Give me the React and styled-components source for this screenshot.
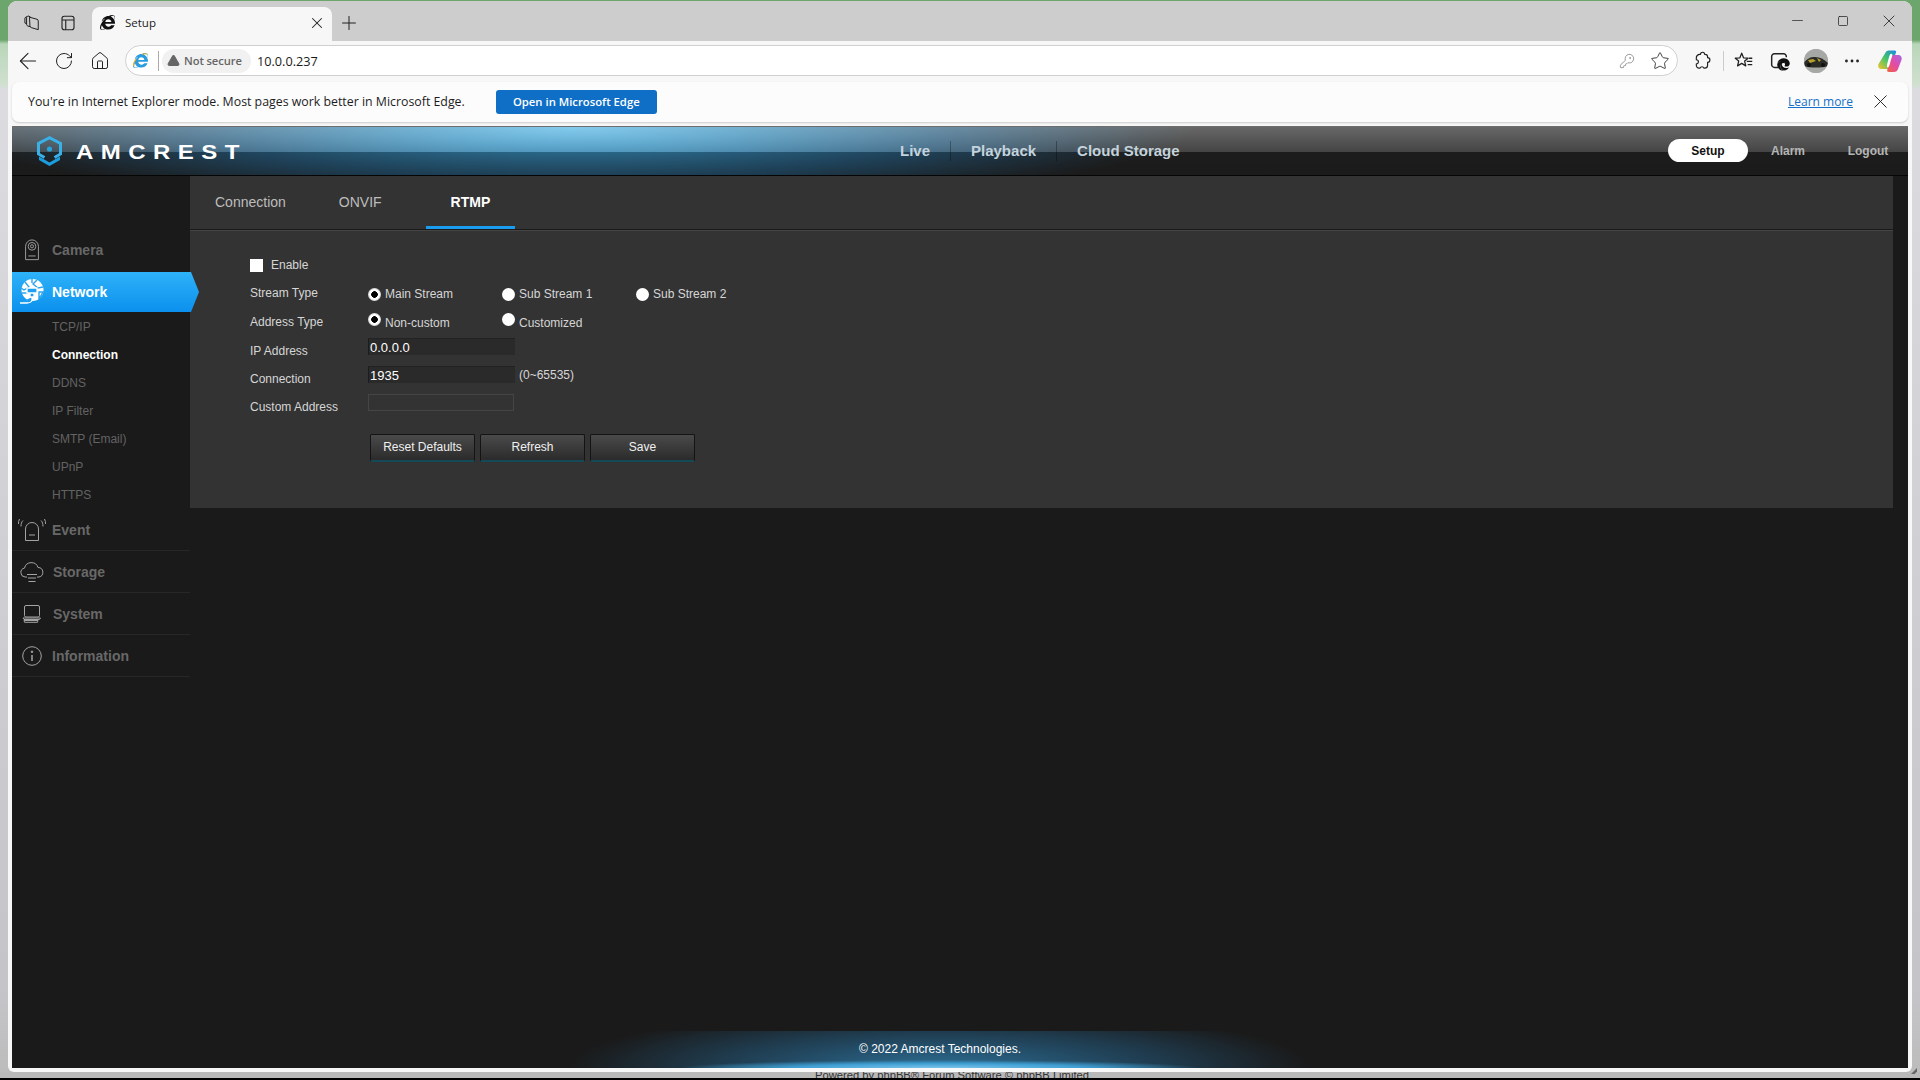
import React from "react";
import styled, { createGlobalStyle } from "styled-components";
import { ArrowLeft, RotateCw, Home, Plus, X, Minus, Square, Star, KeyRound, MoreHorizontal, TriangleAlert } from "lucide-react";
import { FaInternetExplorer, FaEdge } from "react-icons/fa";

const Global = createGlobalStyle`
  html, body { margin: 0; padding: 0; background: #c8c8cc; }
  * { box-sizing: border-box; }
`;

const Desktop = styled.div`
  position: relative; width: 1920px; height: 1080px; overflow: hidden;
  background: linear-gradient(180deg, #6da66d 0, #6da66d 40px, #b9d6b9 44px, #cfe0cf 84px, #dcdce0 90px, #c4c4c8 1000px, #bcbcbc 1072px);
  font-family: "Liberation Sans", Arial, sans-serif;
`;
const BehindStrip = styled.div`
  position: absolute; left: 0; right: 0; bottom: 0; height: 8px; overflow: hidden;
  background: #b9b9b9; border-bottom: 2px solid #000; text-align: center;
  font-size: 11.2px; line-height: 7px; color: #333; padding-right: 16px;
`;
const ResizeGrip = styled.div`
  position: absolute; left: 1911px; top: 1068px; width: 6px; height: 6px;
  background: #666; clip-path: polygon(100% 0, 100% 60%, 60% 100%, 0 100%);
`;
const Window = styled.div`
  position: absolute; left: 8px; top: 1px; width: 1904px; height: 1071px;
  background: #f7f7f7; border-radius: 9px 9px 6px 6px; overflow: hidden;
  display: flex; flex-direction: column;
`;

/* tab strip */
const TabStrip = styled.div`
  height: 40px; background: #cdcdcd; display: flex; align-items: flex-end; position: relative; flex: none;
`;
const StripIcon = styled.div`
  width: 36px; height: 34px; padding-bottom: 3px; display: flex; align-items: center; justify-content: center; color: #222;
`;
const StripLeft = styled.div`
  display: flex; padding-left: 6px; width: 84px; gap: 0;
`;
const Tab = styled.div`
  width: 240px; height: 34px; background: #f7f7f7; border-radius: 8px 8px 0 0;
  display: flex; align-items: center; padding: 0 6px 3px 8px; font: 12px "Open Sans", sans-serif; color: #222;
`;
const TabTitle = styled.span`
  flex: 1; margin-left: 10px; font-size: 11.5px;
`;
const NewTab = styled.div`
  width: 24px; height: 34px; margin-left: 5px; padding-bottom: 3px; display: flex; align-items: center; justify-content: center; color: #222;
`;
const WinControls = styled.div`
  margin-left: auto; display: flex; align-self: flex-start; height: 40px; align-items: center; color: #222;
`;
const WinBtn = styled.div`
  width: 46px; display: flex; justify-content: center; align-items: center; margin-top: -1px;
`;

/* toolbar */
const Toolbar = styled.div`
  height: 41px; flex: none; display: flex; align-items: center; color: #222; position: relative; padding-bottom: 2px;
`;
const NavBtns = styled.div`
  display: flex; width: 117px; padding-left: 2px;
`;
const NavBtn = styled.div`
  width: 36px; display: flex; align-items: center; justify-content: center;
`;
const AddressBar = styled.div`
  width: 1553px; height: 31px; background: #fff; border: 1px solid #cfcfcf; border-radius: 16px;
  display: flex; align-items: center; padding: 0 7px 0 0; font: 12px "Open Sans", sans-serif; flex: none;
`;
const IeWrap = styled.div`
  width: 28px; margin-right: 4px; display: flex; justify-content: center;
`;
const Sep = styled.div`
  width: 1px; height: 20px; background: #aaa; flex: none;
`;
const Secure = styled.div`
  margin-left: 3px; width: 89px; height: 24px; border-radius: 12px; background: #f1f1f1; display: flex; align-items: center;
  padding-left: 5px; gap: 4px; color: #666; font-size: 11.2px; font-weight: 600; white-space: nowrap; letter-spacing: -.1px;
`;
const Url = styled.div`
  margin-left: 6px; flex: 1; color: #1a1a1a; font-size: 12.7px;
`;
const AddrIcons = styled.div`
  display: flex; gap: 15px; align-items: center; color: #777;
`;
const Tools = styled.div`
  flex: 1; display: flex; align-items: center; position: relative; height: 30px;
`;
const ToolIcon = styled.div`
  position: absolute; left: ${p => p.$x}px; top: 50%; transform: translate(-50%, -50%); display: flex; color: #222;
`;
const ToolSep = styled(Sep)`
  position: absolute; top: 5px; left: ${p => p.$x}px; background: #ccc;
`;
const Avatar = styled.div`
  width: 24px; height: 24px; border-radius: 50%; overflow: hidden; background: #a9a9a9;
`;

/* info bar */
const InfoBar = styled.div`
  flex: none; height: 40px; margin: 0 4px; background: #fcfcfc; border-radius: 7px;
  box-shadow: 0 1px 2px rgba(0,0,0,.18); display: flex; align-items: center; padding: 0 16px 1px 16px;
  font: 12.35px "Open Sans", sans-serif; color: #1c1c1c; white-space: nowrap;
`;
const InfoOpen = styled.button`
  margin-left: 31px; width: 161px; height: 24px; border: 0; border-radius: 3px; background: #0f6fc6; color: #fff;
  font: 600 11.3px "Open Sans", sans-serif; padding: 0;
`;
const LearnMore = styled.a`
  margin-left: auto; color: #1670c9; text-decoration: underline; font-size: 12px;
`;
const InfoClose = styled.div`
  margin-left: 16px; display: flex; color: #222;
`;

/* amcrest page */
const Page = styled.div`
  flex: none; margin: 4px 4px 0; height: 942px; background: #1a1a1a; display: flex; flex-direction: column; position: relative;
`;
const Header = styled.header`
  height: 50px; flex: none; display: flex; align-items: center;
  border-top: 1px solid #6d6d6d; border-bottom: 1px solid #050505;
  background:
    linear-gradient(180deg, rgba(255,255,255,.3) 0, rgba(255,255,255,.14) 25px, rgba(0,0,0,.25) 25px, rgba(0,0,0,.3) 100%),
    radial-gradient(ellipse 620px 80px at 560px 0, #4fb5e6 0, #3a92c0 25%, #2a5a7a 62%, rgba(38,38,38,0) 100%),
    #262626;
`;
const Logo = styled.div`
  width: 228px; padding-left: 24px; display: flex; align-items: center; gap: 13px; flex: none;
  svg { flex: none; }
`;
const LogoText = styled.span`
  display: inline-block; transform: scaleX(1.2); transform-origin: 0 50%; position: relative; top: 1px;
  font-size: 20px; font-weight: 700; color: #fff; letter-spacing: 6.2px; line-height: 1; white-space: nowrap;
`;
const MainNav = styled.nav`
  margin-left: 640px; display: flex; height: 20px; align-items: center;
`;
const MainNavItem = styled.a`
  padding: 0 20px; font-size: 15px; font-weight: 700; color: #c4d3dc; height: 20px; line-height: 20px;
  border-right: 1px solid ${p => p.$last ? "transparent" : "rgba(0,0,0,.3)"};
`;
const RightNav = styled.div`
  margin-left: auto; display: flex; align-items: center;
`;
const RightItem = styled.a`
  width: 80px; height: 23px; line-height: 25px; text-align: center; font-size: 12px; font-weight: 700; margin-top: -2px;
  color: ${p => p.$active ? "#111" : "#b5b5b5"}; background: ${p => p.$active ? "#fff" : "transparent"};
  border-radius: 12px;
`;

const Body = styled.div`
  flex: 1; display: flex; min-height: 0;
`;
const Sidebar = styled.aside`
  width: 178px; flex: none; padding-top: 54px; position: relative; z-index: 1;
`;
const NavRow = styled.div`
  height: 42px; display: flex; align-items: center; font-size: 14px; font-weight: 700; color: #686868;
  padding-bottom: ${p => p.$line ? 0 : 2}px;
  border-bottom: 1px solid ${p => p.$line ? "#272727" : "transparent"};
`;
const NavIconBox = styled.div`
  width: ${p => p.$w || 40}px; flex: none; display: flex; justify-content: center; color: #a4a4a4; padding-right: ${p => p.$w ? 1 : 0}px;
`;
const NavActive = styled.div`
  width: 187px; height: 40px; margin-bottom: 1px; display: flex; align-items: center; font-size: 14px; font-weight: 700; color: #fff;
  background: linear-gradient(180deg, #2eb2f8 0, #0b90ee 100%);
  clip-path: polygon(0 0, 179px 0, 100% 50%, 179px 100%, 0 100%);
`;
const SubItem = styled.div`
  height: 28px; line-height: 28px; padding-left: 40px; font-size: 12px;
  color: ${p => p.$active ? "#fff" : "#636363"}; font-weight: ${p => p.$active ? 700 : 400};
`;
const Main = styled.main`
  flex: 1; padding-right: 15px; display: flex; flex-direction: column; min-width: 0;
`;
const Panel = styled.section`
  height: 332px; background: #333333;
`;
const Tabs = styled.div`
  height: 54px; display: flex; border-bottom: 1px solid #1a1a1a; box-shadow: 0 1px 0 #444;
`;
const TabItem = styled.a`
  margin-left: ${p => p.$ml || 0}px; padding: 0 25px; height: 53px; line-height: 52px; font-size: 14px;
  color: ${p => p.$active ? "#fff" : "#bdbdbd"}; font-weight: ${p => p.$active ? 700 : 400};
  border-bottom: 3px solid ${p => p.$active ? "#1a9cf0" : "transparent"};
`;
const Form = styled.div`
  padding: 22px 0 0 60px; display: flex; flex-direction: column; color: #d6d6d6; font-size: 12px;
`;
const Row = styled.div`
  height: 28px; display: flex; align-items: center;
`;
const EnableRow = styled(Row)`
  height: 26px; margin-bottom: 2px;
`;
const Label = styled.label`
  width: 118px; flex: none; position: relative; top: ${p => p.$dy || 0}px;
`;
const Check = styled.input`
  appearance: none; width: 13px; height: 13px; background: #fff; margin: 0 8px 0 0; border-radius: 0;
`;
const RadioCell = styled.label`
  width: 134px; display: flex; align-items: center; gap: 4px; flex: none; position: relative; top: ${p => p.$dy || 0}px;
`;
const Radio = styled.input`
  appearance: none; width: 13px; height: 13px; margin: 0; border-radius: 50%; background: #fff; flex: none;
  position: relative; top: ${p => p.$dy || 0}px;
  ${p => p.$on && "background: radial-gradient(circle, #000 0 3px, #fff 3.6px 5px, #ddd 5.5px);"}
`;
const TextField = styled.input`
  width: ${p => p.$w || 147}px; height: 17px; background: ${p => p.$w ? "transparent" : "#2a2a2a"}; color: #fff;
  border: ${p => p.$w ? "1px solid #454545" : "0"}; padding: 0 1px; font: 13px "Liberation Sans", sans-serif; outline: 0;
  align-self: flex-start; margin-top: 2px; border-radius: 0;
  ${p => !p.$w && "border-top: 1px solid #222; border-left: 1px solid #1c1c1c;"}
`;
const Hint = styled.span`
  margin-left: 4px; position: relative; top: -3px;
`;
const Buttons = styled.div`
  display: flex; gap: 5px; margin: 14px 0 0 120px;
`;
const Btn = styled.button`
  width: 105px; height: 28px; padding: 0 0 1px; color: #f0f0f0; font: 12px "Liberation Sans", sans-serif;
  background: linear-gradient(180deg, #4a4a4a 0, #2b2b2b 100%);
  border: 1px solid #141414; border-bottom: 2px solid #144a58; border-radius: 2px;
`;
const Footer = styled.footer`
  margin-top: auto; margin-left: -178px; margin-right: 25px; height: 37px; color: #fff; font-size: 12px; text-align: center; padding-top: 11px; line-height: 14px;
  background:
    radial-gradient(ellipse 260px 8px at 50% 100%, #7cc4ea 0, #3f9fd3 55%, rgba(60,150,200,0) 100%),
    radial-gradient(ellipse 370px 60px at 50% 100%, #2f6f94 0, #24506c 35%, #1f3a4c 62%, rgba(26,26,26,0) 100%);
`;

const S = ({ w = 24, h, vb, children, ...r }) => (
  <svg width={w} height={h || w} viewBox={vb || "0 0 24 24"} fill="none" stroke="currentColor" {...r}>{children}</svg>
);

const WorkspacesIcon = () => (
  <S w={20} strokeWidth={1.2} strokeLinejoin="round">
    <path d="M9 5l9 2.5c1 .3 1.5 1 1.5 2V20l-8.500-2.500c-1-.3-1.500-1-1.500-2z" />
    <path d="M10 16.500 7 15.600c-1-.3-1.500-1-1.500-2V5L7 3.500 10 4.500" />
    <path d="M5.500 13 3.500 12V6l2-2" />
  </S>
);
const TabActionsIcon = () => (
  <S w={18} strokeWidth={1.5}><rect x="4" y="3" width="16" height="18" rx="3" /><path d="M4 8h16M9 8v13" /></S>
);
const PuzzleIcon = () => (
  <S w={20} strokeWidth={1.4} strokeLinejoin="round">
    <path d="M9 4a2.500 2.500 0 0 1 5 0h.5c1.500 0 3 1 3 3v1a2.500 2.500 0 1 1 0 5.500V17c0 2-1.500 3.500-3.500 3.500h-1a2.400 2.400 0 0 0-4.500 0H7c-1.500 0-3-1.500-3-3v-2a2.500 2.500 0 0 0 0-5V8c0-2 1.500-3.500 3.500-4z" />
  </S>
);
const FavIcon = () => (
  <S w={22} strokeWidth={1.4} strokeLinejoin="round">
    <path d="M9.500 3.500l2 5 5 .4-3.800 3.200 1.200 5.200-4.400-2.700-4.500 2.700 1.200-5.200L2.500 8.900l5-.4z" />
    <path d="M15 12.500h6M16 16h5M17.500 9h3.500" />
  </S>
);
const CollectionsEdge = () => (
  <span style={{ position: "relative", display: "flex" }}>
    <S w={22} strokeWidth={1.6}><path d="M11 19H7c-1.500 0-3-1.500-3-3V7c0-1.500 1.500-3 3-3h10c1.500 0 3 1.500 3 3v1" /></S>
    <FaEdge size={13} color="#111" style={{ position: "absolute", right: 0, bottom: 1 }} />
  </span>
);
const Copilot = () => (
  <svg width="26" height="26" viewBox="0 0 26 26">
    <defs>
      <linearGradient id="cpA" x1="0" y1="1" x2="1" y2="0"><stop offset="0" stopColor="#f6c32c" /><stop offset=".5" stopColor="#42c46a" /><stop offset="1" stopColor="#1a86e6" /></linearGradient>
      <linearGradient id="cpB" x1="0" y1="1" x2="1" y2="0"><stop offset="0" stopColor="#f4633a" /><stop offset=".5" stopColor="#e24ba8" /><stop offset="1" stopColor="#a468e8" /></linearGradient>
    </defs>
    <path d="M8 5.500c.8-1.800 2-3 4-3h5.500c1.500 0 2 1 1.500 2L14 18c-.7 1.800-2 3-4 3H4.500C2 21 .5 19 1.500 16z" fill="url(#cpA)" />
    <path d="M14 9c.6-1.500 2-2 3.500-2H21c2.500 0 4.500 2 3.500 5L21 21c-.7 1.800-2 3-4 3h-5c-1.500 0-2.200-1-1.700-2.300z" fill="url(#cpB)" />
    <path d="M13 6.500c1-1 2-1 2.300 0 .3 1-1.300 5-1.800 7-.5 2-1.500 6-2.500 6s-1.300-1-1-2.500c.5-2 2-8.500 3-10.500z" fill="#fff" />
  </svg>
);
const AvatarPic = () => (
  <svg width="24" height="24" viewBox="0 0 24 24">
    <rect width="24" height="24" fill="#a6a8a6" />
    <path d="M0 14c3-5 7-6 11-6 5 0 9 2 13 6v3c-6 2-18 2-24 0z" fill="#2b2b26" />
    <path d="M4 11l5-1 3 2-6 2zM13 9l4 2-2 2z" fill="#b6a130" />
    <circle cx="5" cy="16" r="2" fill="#111" /><circle cx="19" cy="16" r="2" fill="#111" />
  </svg>
);
const ColorIE = () => (
  <span style={{ position: "relative", display: "flex" }}>
    <FaInternetExplorer size={15} color="#2a9bdc" />
    <svg width="15" height="15" viewBox="0 0 15 15" fill="none" style={{ position: "absolute", inset: 0 }}>
      <path d="M1 13c-1-1 0-4 2-7" stroke="#f2b01e" strokeWidth="1.100" />
      <path d="M9 1.500c2-1 4-1 5 0" stroke="#f2b01e" strokeWidth="1" />
    </svg>
  </span>
);

const AmcrestMark = () => (
  <svg width="27" height="30" viewBox="0 0 27 30" fill="none">
    <path d="M8.500 21.500 2.500 18V7.500L13.500 1.700 24.500 7.500V18l-6 3.500" stroke="#39b0e6" strokeWidth="3" strokeLinejoin="miter" />
    <path d="M3 20.500l10.500 6 10.500-6v3.500l-10.500 6-10.500-6z" fill="#1b9ee0" />
    <circle cx="13.500" cy="13" r="2.600" fill="#27a4de" />
  </svg>
);

const CameraIcon = () => (
  <S w={22} vb="0 0 22 24" strokeWidth={1}>
    <path d="M4 22.500V8a7 7 0 0 1 14 0v14.500z" /><circle cx="11" cy="8" r="4.200" /><circle cx="11" cy="8" r="1.700" /><path d="M7 18.500h8" />
  </S>
);
const GlobeIcon = () => (
  <svg width="24" height="26" viewBox="0 0 24 26">
    <circle cx="12.500" cy="11" r="11" fill="#fff" />
    <path d="M5 3l4 5-5 3-3-2M17 1l-4 4 5 4 5-1M19 13l4 0-4 7zM12 0v4M8 14l-6 0" stroke="#2aa5ee" strokeWidth="1.400" fill="none" />
    <path d="M7 9h10v5H7zM10 14v4h4v-4M12 18v3c0 2-3 3-5 3H0" fill="#1e9ff0" stroke="#fff" strokeWidth="1.300" />
  </svg>
);
const EventIcon = () => (
  <S w={28} h={24} vb="0 0 28 24" strokeWidth={1}>
    <path d="M7.500 22.500V11a6.500 6.500 0 0 1 13 0v11.500zM11 17h6M5 2.500C3.500 4 3 6 3 8.500M1.500 1C.7 2.500.4 4 .5 6M23 2.500C24.500 4 25 6 25 8.500M26.500 1c.8 1.500 1.100 3 1 5" />
  </S>
);
const CloudIcon = () => (
  <S w={24} vb="0 0 24 24" strokeWidth={1}>
    <path d="M7 17H5a4.500 4.500 0 0 1-.5-8.900 7 7 0 0 1 13.500-.6 4.800 4.800 0 0 1 1 9.500h-2" /><path d="M7 14.500h10M8 18h8M8.500 21.500h7" />
  </S>
);
const SystemIcon = () => (
  <S w={20} h={20} vb="0 0 20 20" strokeWidth={1}>
    <rect x="2.500" y="1.500" width="15" height="11.500" rx="1.500" /><path d="M1 14h17.500l-1 1.500H2zM2 16.500h14l-.5 1.800H2.500z" />
  </S>
);
const InfoIcon = () => (
  <S w={20} vb="0 0 20 20" strokeWidth={1}>
    <circle cx="10" cy="10" r="9.300" /><path d="M10 9v6" strokeWidth="1.500" /><circle cx="10" cy="5.800" r=".8" fill="currentColor" />
  </S>
);

const subs = ["TCP/IP", "Connection", "DDNS", "IP Filter", "SMTP (Email)", "UPnP", "HTTPS"];

export default function App() {
  return (
    <Desktop>
      <Global />
      <BehindStrip>Powered by phpBB® Forum Software © phpBB Limited</BehindStrip>
      <ResizeGrip />
      <Window>
        <TabStrip>
          <StripLeft>
            <StripIcon><WorkspacesIcon /></StripIcon>
            <StripIcon><TabActionsIcon /></StripIcon>
          </StripLeft>
          <Tab>
            <FaInternetExplorer size={15} color="#111" />
            <TabTitle>Setup</TabTitle>
            <X size={18} strokeWidth={1.4} />
          </Tab>
          <NewTab><Plus size={22} strokeWidth={1.1} /></NewTab>
          <WinControls>
            <WinBtn><Minus size={17} strokeWidth={1} /></WinBtn>
            <WinBtn><Square size={12} strokeWidth={1.5} /></WinBtn>
            <WinBtn><X size={20} strokeWidth={1} /></WinBtn>
          </WinControls>
        </TabStrip>
        <Toolbar>
          <NavBtns>
            <NavBtn><ArrowLeft size={26} strokeWidth={1} /></NavBtn>
            <NavBtn><RotateCw size={20} strokeWidth={1.2} /></NavBtn>
            <NavBtn><Home size={20} strokeWidth={1.2} /></NavBtn>
          </NavBtns>
          <AddressBar>
            <IeWrap><ColorIE /></IeWrap>
            <Sep />
            <Secure><TriangleAlert size={13} fill="#666" color="#666" />Not secure</Secure>
            <Url>10.0.0.237</Url>
            <AddrIcons>
              <KeyRound size={16} strokeWidth={1.1} />
              <Star size={20} strokeWidth={1.1} color="#333" />
            </AddrIcons>
          </AddressBar>
          <Tools>
            <ToolIcon $x={25}><PuzzleIcon /></ToolIcon>
            <ToolSep $x={45} />
            <ToolIcon $x={66}><FavIcon /></ToolIcon>
            <ToolIcon $x={101}><CollectionsEdge /></ToolIcon>
            <ToolIcon $x={138}><Avatar><AvatarPic /></Avatar></ToolIcon>
            <ToolIcon $x={174}><MoreHorizontal size={19} strokeWidth={1.6} /></ToolIcon>
            <ToolIcon $x={212}><Copilot /></ToolIcon>
          </Tools>
        </Toolbar>
        <InfoBar>
          <span>You're in Internet Explorer mode. Most pages work better in Microsoft Edge.</span>
          <InfoOpen>Open in Microsoft Edge</InfoOpen>
          <LearnMore>Learn more</LearnMore>
          <InfoClose><X size={23} strokeWidth={1} /></InfoClose>
        </InfoBar>
        <Page>
          <Header>
            <Logo>
              <AmcrestMark />
              <LogoText>AMCREST</LogoText>
            </Logo>
            <MainNav>
              <MainNavItem>Live</MainNavItem>
              <MainNavItem>Playback</MainNavItem>
              <MainNavItem $last>Cloud Storage</MainNavItem>
            </MainNav>
            <RightNav>
              <RightItem $active>Setup</RightItem>
              <RightItem>Alarm</RightItem>
              <RightItem>Logout</RightItem>
            </RightNav>
          </Header>
          <Body>
            <Sidebar>
              <NavRow><NavIconBox><CameraIcon /></NavIconBox>Camera</NavRow>
              <NavActive><NavIconBox><GlobeIcon /></NavIconBox>Network</NavActive>
              {subs.map((s) => <SubItem key={s} $active={s === "Connection"}>{s}</SubItem>)}
              <NavRow $line><NavIconBox><EventIcon /></NavIconBox>Event</NavRow>
              <NavRow $line><NavIconBox $w={41}><CloudIcon /></NavIconBox>Storage</NavRow>
              <NavRow $line><NavIconBox $w={41}><SystemIcon /></NavIconBox>System</NavRow>
              <NavRow $line><NavIconBox><InfoIcon /></NavIconBox>Information</NavRow>
            </Sidebar>
            <Main>
              <Panel>
                <Tabs>
                  <TabItem>Connection</TabItem>
                  <TabItem $ml={3}>ONVIF</TabItem>
                  <TabItem $ml={19} $active>RTMP</TabItem>
                </Tabs>
                <Form>
                  <EnableRow><Check type="checkbox" />Enable</EnableRow>
                  <Row>
                    <Label $dy={-1}>Stream Type</Label>
                    <RadioCell><Radio type="radio" name="s" $on />Main Stream</RadioCell>
                    <RadioCell><Radio type="radio" name="s" />Sub Stream 1</RadioCell>
                    <RadioCell><Radio type="radio" name="s" />Sub Stream 2</RadioCell>
                  </Row>
                  <Row>
                    <Label>Address Type</Label>
                    <RadioCell $dy={1}><Radio type="radio" name="a" $on $dy={-4} />Non-custom</RadioCell>
                    <RadioCell $dy={1}><Radio type="radio" name="a" $dy={-4} />Customized</RadioCell>
                  </Row>
                  <Row><Label $dy={1}>IP Address</Label><TextField defaultValue="0.0.0.0" /></Row>
                  <Row><Label $dy={1}>Connection</Label><TextField defaultValue="1935" /><Hint>(0~65535)</Hint></Row>
                  <Row><Label $dy={1}>Custom Address</Label><TextField $w={146} /></Row>
                  <Buttons>
                    <Btn>Reset Defaults</Btn>
                    <Btn>Refresh</Btn>
                    <Btn>Save</Btn>
                  </Buttons>
                </Form>
              </Panel>
              <Footer>© 2022 Amcrest Technologies.</Footer>
            </Main>
          </Body>
        </Page>
      </Window>
    </Desktop>
  );
}
